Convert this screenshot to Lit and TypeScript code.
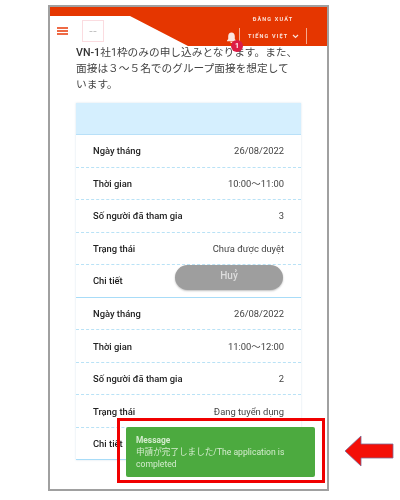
import { LitElement, html, css } from "lit";
import { customElement } from "lit/decorators.js";

type Row = [string, string];
const first: Row[] = [
  ["Ngày tháng", "26/08/2022"],
  ["Thời gian", "10:00〜11:00"],
  ["Số người đã tham gia", "3"],
  ["Trạng thái", "Chưa được duyệt"],
];
const second: Row[] = [
  ["Ngày tháng", "26/08/2022"],
  ["Thời gian", "11:00〜12:00"],
  ["Số người đã tham gia", "2"],
  ["Trạng thái", "Đang tuyển dụng"],
];

@customElement("app-root")
export class AppRoot extends LitElement {
  static styles = css`
    :host {
      display: block;
      width: 400px;
      height: 500px;
      overflow: hidden;
      background: #fff;
      position: relative;
      font-family: Roboto, "Noto Sans CJK JP", sans-serif;
      color: #333;
    }
    .stage { filter: blur(0.4px); height: 500px; position: relative; }
    .frame {
      position: absolute;
      left: 48px;
      top: 5px;
      width: 281px;
      height: 486px;
      box-sizing: border-box;
      border: 2px solid #a0a0a0;
      background: #fff;
      overflow: hidden;
    }
    .bar {
      height: 39px;
      background: #e53600;
      clip-path: polygon(0 0, 100% 0, 100% 100%, 138px 100%, 80px 9px, 0 9px);
      display: flex;
      justify-content: flex-end;
    }
    .top-left {
      position: absolute;
      left: 0;
      top: 9px;
      display: flex;
      align-items: flex-start;
    }
    .menu { width: 11px; margin: 11px 0 0 7px; display: flex; flex-direction: column; gap: 1.4px; }
    .menu i { display: block; height: 1.6px; background: #ee6a45; }
    .logo {
      width: 20px;
      height: 20px;
      margin: 4px 0 0 14px;
      border: 1px solid #fbdce0;
      display: flex;
      align-items: center;
      justify-content: center;
      color: #777;
      font-size: 6px;
      line-height: 1;
    }
    .actions {
      width: 88px;
      color: #fbe3da;
      font-size: 5.5px;
      font-weight: 700;
      letter-spacing: 1.15px;
    }
    .logout { width: 68px; height: 15px; line-height: 15px; margin-top: 5px; margin-bottom: 1px; text-align: center; }
    .lang {
      box-sizing: border-box;
      height: 16px;
      width: 68px;
      padding-left: 8px;
      display: flex;
      align-items: center;
      gap: 4px;
      border-left: 1px solid #f5a98f;
      border-right: 1px solid #f5a98f;
    }
    .bell { position: absolute; left: 176px; top: 24px; width: 11px; height: 13px; }
    .badge {
      position: absolute;
      left: 181px;
      top: 33px;
      width: 12px;
      height: 12px;
      border-radius: 50%;
      background: #dc1c45;
      color: #fff;
      font-size: 7px;
      font-weight: 700;
      line-height: 12px;
      text-align: center;
      z-index: 2;
    }
    .content { padding: 0 26px 0 26px; margin-top: -2px; }
    .intro {
      margin: 0;
      width: 222px;
      font-size: 10.7px;
      line-height: 16px;
      color: #444;
      height: 59px;
      padding-top: 0.5px;
      box-sizing: border-box;
    }
    .intro b { font-weight: 500; color: #333; }
    .card { box-shadow: 0 0 2px rgba(120, 160, 190, 0.3); }
    .head {
      height: 31px;
      background: #d5effe;
      border-bottom: 1px solid #b8e0f8;
    }
    .row {
      height: 31.55px;
      display: flex;
      align-items: center;
      justify-content: space-between;
      padding: 0 17px;
      font-size: 9.4px;
      border-bottom: 1px dashed #b9e2f6;
      color: #444;
    }
    .row span:first-child { font-weight: 500; color: #222; }
    .row.last { border-bottom: 1px solid #a8dcf8; position: relative; }
    .last.end { border-bottom: 1.5px solid #a8dcf8; }
    .cancel {
      position: absolute;
      right: 18px;
      top: 0;
      width: 108px;
      height: 25px;
      border-radius: 13px;
      background: #9e9e9e;
      color: #ddd;
      font-size: 10px;
      font-weight: 500;
      line-height: 22px;
      text-align: center;
      box-shadow: 0 1px 2px rgba(0, 0, 0, 0.25);
    }
    .toast {
      position: absolute;
      left: 126px;
      top: 427px;
      width: 189px;
      height: 50px;
      box-sizing: border-box;
      background: #4caa3f;
      border-radius: 2px;
      padding: 7px 10px;
      color: #d4ecce;
      font-size: 8.6px;
      line-height: 12px;
    }
    .toast b { display: block; font-weight: 700; font-size: 8.4px; }
    .mark {
      position: absolute;
      left: 117px;
      top: 418px;
      width: 208px;
      height: 65px;
      box-sizing: border-box;
      border: 3px solid #f00000;
    }
    .arrow { position: absolute; left: 344px; top: 435px; width: 50px; height: 32px; }
  `;

  private rows(data: Row[]) {
    return data.map(
      ([k, v]) => html`<div class="row"><span>${k}</span><span>${v}</span></div>`
    );
  }

  render() {
    return html`
      <div class="stage">
        <div class="frame">
          <div class="bar">
            <div class="actions">
              <div class="logout">ĐĂNG XUẤT</div>
              <div class="lang">
                <span>TIẾNG VIỆT</span>
                <svg width="7" height="5" viewBox="0 0 7 5"><path d="M1 1l2.500 2.500L6 1" fill="none" stroke="#fbe3da" stroke-width="1.200"/></svg>
              </div>
            </div>
          </div>
          <div class="top-left">
            <div class="menu"><i></i><i></i><i></i></div>
            <div class="logo">––</div>
          </div>
          <svg class="bell" viewBox="0 0 13 14"><path d="M6.500 1.200c-2.400 0-3.900 1.900-3.900 4.300v3.200L1.200 10.600v.8h10.600v-.8l-1.400-1.900V5.500c0-2.400-1.500-4.300-3.900-4.300zM5 12h3a1.500 1.500 0 0 1-3 0z" fill="#fbe6df"/></svg>
          <div class="badge">1</div>
          <div class="content">
            <p class="intro"><b>VN-1</b>社1枠のみの申し込みとなります。また、面接は３～５名でのグループ面接を想定しています。</p>
            <div class="card">
              <div class="head"></div>
              ${this.rows(first)}
              <div class="row last"><span>Chi tiết</span><div class="cancel">Huỷ</div></div>
              ${this.rows(second)}
              <div class="row last end"><span>Chi tiết</span></div>
            </div>
          </div>
        </div>
        <div class="toast"><b>Message</b>申請が完了しました/The application is completed</div>
        <div class="mark"></div>
        <svg class="arrow" viewBox="0 0 50 32"><path d="M1 16 17 1v8h32v14H17v8z" fill="#f40f08" stroke="#7d6a96" stroke-width="0.800"/></svg>
      </div>
    `;
  }
}
